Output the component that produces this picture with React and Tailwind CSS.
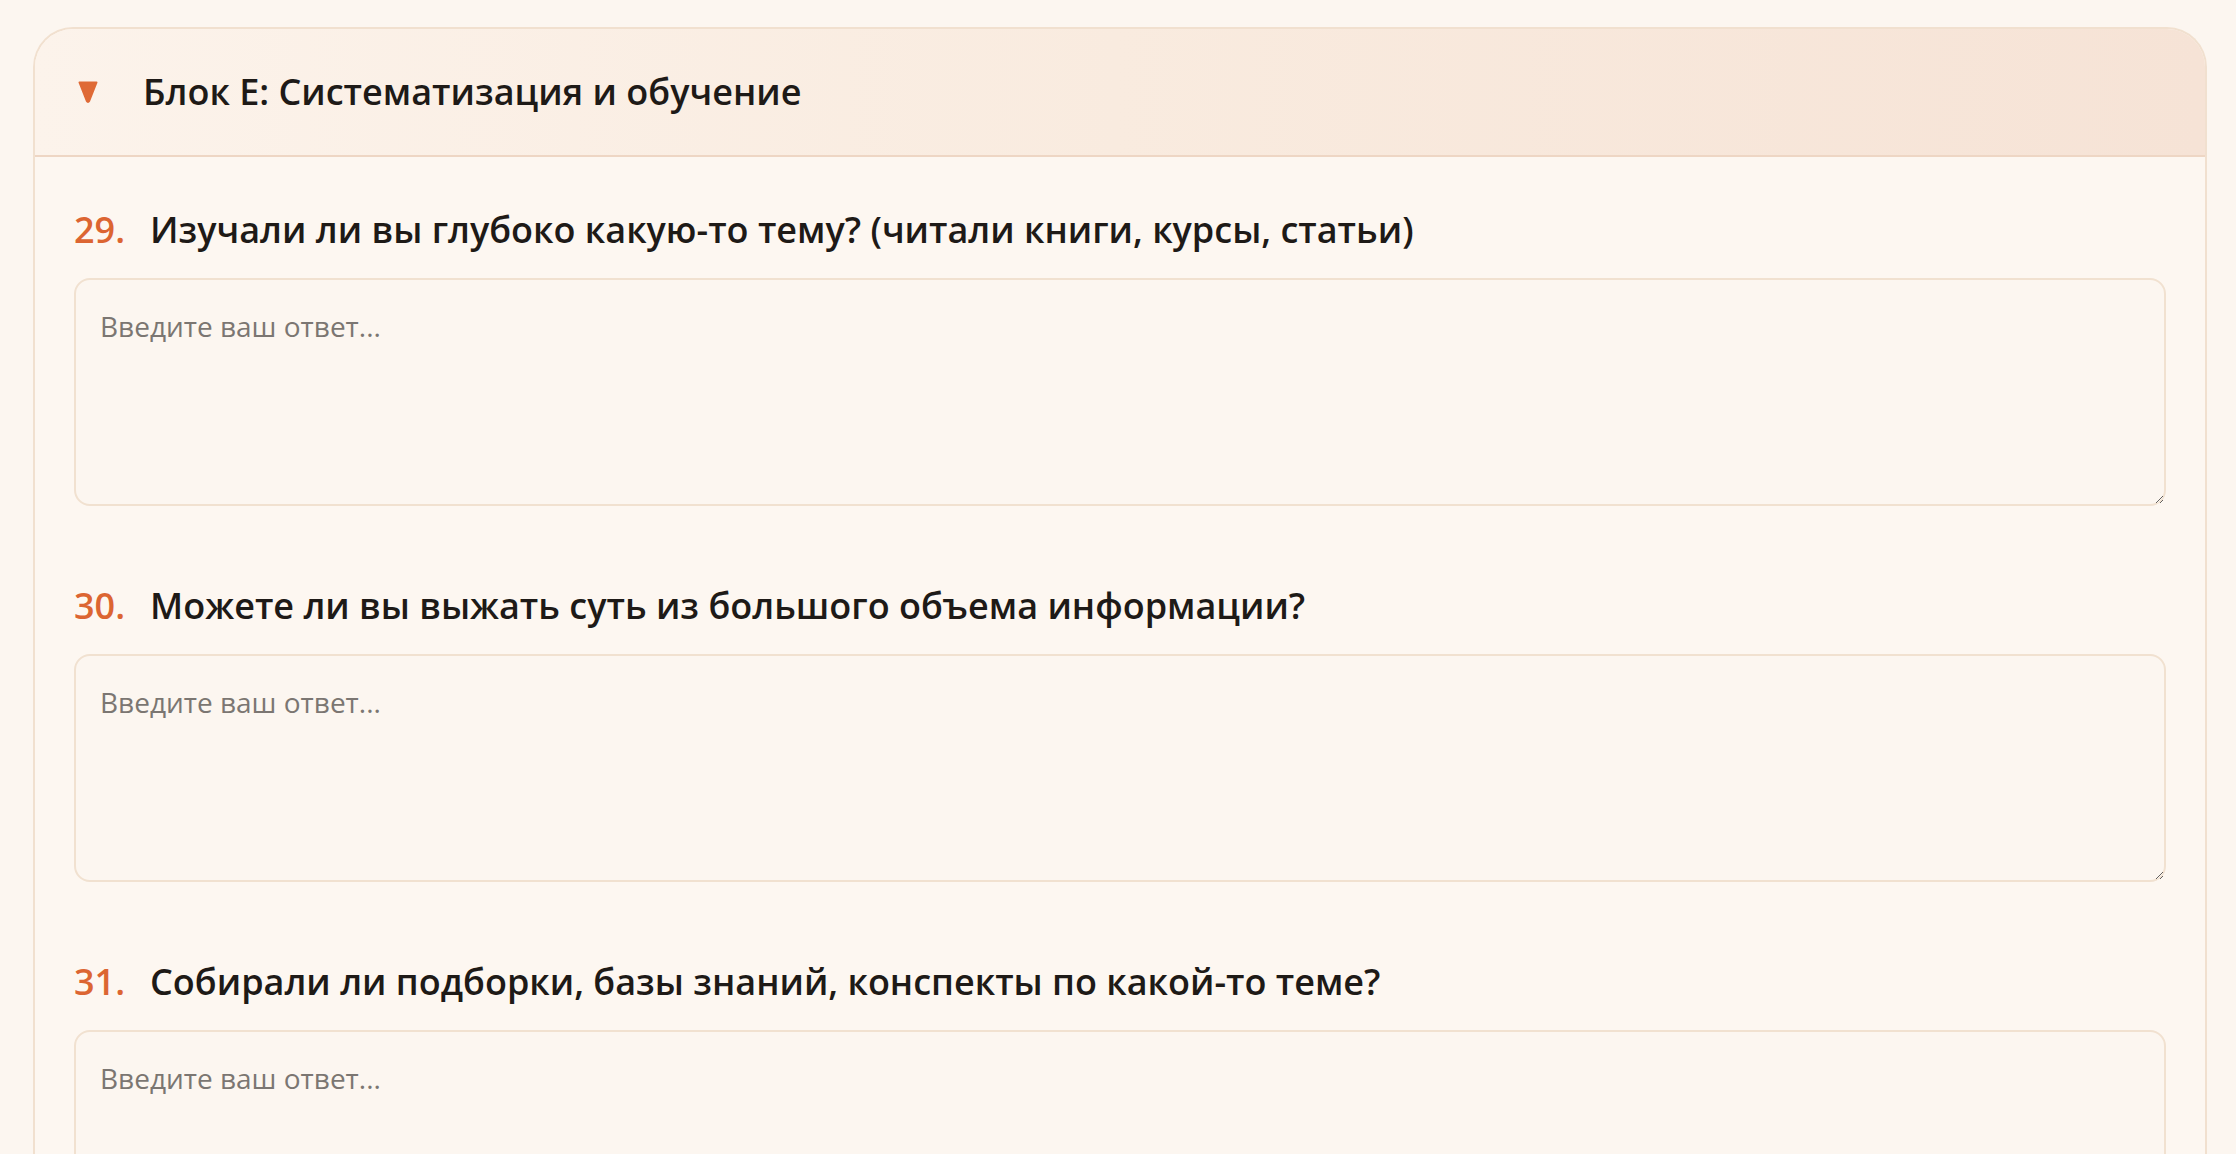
import { useState } from 'react'

const questions = [
  { n: 29, text: 'Изучали ли вы глубоко какую-то тему? (читали книги, курсы, статьи)' },
  { n: 30, text: 'Можете ли вы выжать суть из большого объема информации?' },
  { n: 31, text: 'Собирали ли подборки, базы знаний, конспекты по какой-то теме?' },
]

function Question({ n, text, value, onChange }) {
  return (
    <div className="flex flex-col">
      <label className="flex items-center gap-[25px] h-[48px] mb-[24px] text-[36px] font-semibold leading-[48px]">
        <span className="text-[#dc6532]">{n}.</span>
        <span className="text-[#1e1a17]">{text}</span>
      </label>
      <textarea
        value={value}
        onChange={e => onChange(e.target.value)}
        placeholder="Введите ваш ответ..."
        className="h-[228px] w-full resize-y rounded-[16px] border-2 border-[#f1e1d0] bg-[#fcf6f0] px-[24px] pt-[26px] text-[28px] leading-[40px] text-[#1e1a17] placeholder:text-[#7b7672] outline-none"
      />
    </div>
  )
}

export default function App() {
  const [answers, setAnswers] = useState({})

  return (
    <div
      className="min-h-screen bg-[#fcf6f0] pt-[27px] pl-[33px] pr-[29px]"
      style={{ fontFamily: '"Open Sans", "Noto Sans", sans-serif' }}
    >
      <section className="rounded-t-[40px] border-2 border-b-0 border-[#f1e0cf] bg-[#fdf7f1] overflow-hidden">
        {/* Block header */}
        <div className="flex items-center gap-[45px] h-[128px] pl-[43px] border-b-2 border-[#eed6c4] bg-gradient-to-r from-[#fcf3eb] via-[#f9ebdf] to-[#f6e3d6]">
          <svg width="20" height="22" viewBox="0 0 20 22" className="shrink-0">
            <path d="M1.5 1.5 H18.5 L11.2 20 Q10 22 8.8 20 Z" fill="#df6a36" stroke="#df6a36" strokeWidth="2" strokeLinejoin="round" />
          </svg>
          <h2 className="text-[36px] font-semibold text-[#1e1a17]">Блок Е: Систематизация и обучение</h2>
        </div>

        {/* Questions */}
        <div className="flex flex-col gap-[76px] px-[39px] pt-[49px] pb-[60px]">
          {questions.map(q => (
            <Question
              key={q.n}
              n={q.n}
              text={q.text}
              value={answers[q.n] || ''}
              onChange={v => setAnswers(a => ({ ...a, [q.n]: v }))}
            />
          ))}
        </div>
      </section>
    </div>
  )
}
